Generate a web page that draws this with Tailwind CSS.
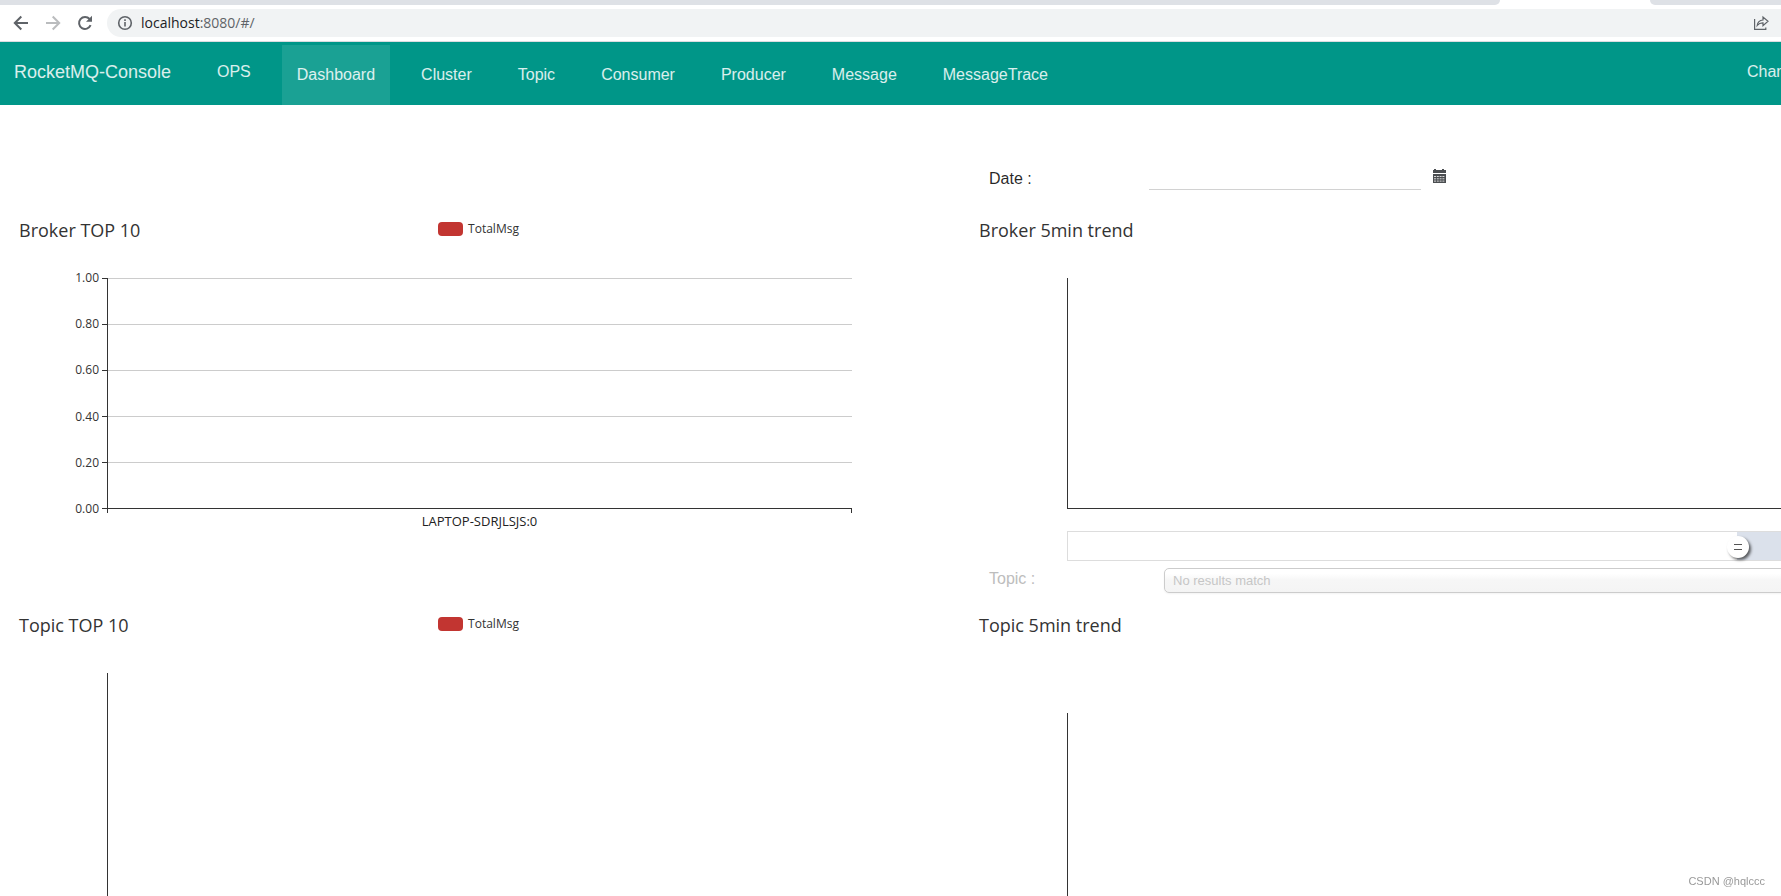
<!DOCTYPE html>
<html lang="en">
<head>
<meta charset="utf-8">
<title>RocketMQ-Console</title>
<script src="https://cdn.jsdelivr.net/npm/@tailwindcss/browser@4"></script>
</head>
<body class="flex h-screen flex-col overflow-hidden bg-white font-['Liberation_Sans',sans-serif] text-base text-black/85">

<!-- Browser toolbar -->
<header class="shrink-0 border-b border-[#dadce0] bg-white">
  <div class="flex h-[5px] justify-between">
    <div class="w-[1500px] rounded-br-lg bg-[#dee1e6]"></div>
    <div class="w-[131px] rounded-bl-lg bg-[#dee1e6]"></div>
  </div>
  <div class="flex items-center py-1 pl-[13px]">
    <button type="button" aria-label="Back" class="mr-4 size-4 text-[#5f6368]">
      <svg viewBox="0 0 16 16" class="size-4" fill="none" stroke="currentColor" stroke-width="2"><path d="M15 8H2.500M8.300 1.500 1.800 8l6.500 6.500"/></svg>
    </button>
    <button type="button" aria-label="Forward" class="mr-4 size-4 text-[#babcbe]">
      <svg viewBox="0 0 16 16" class="size-4" fill="none" stroke="currentColor" stroke-width="2"><path d="M1 8h12.500M7.700 1.500 14.200 8l-6.500 6.500"/></svg>
    </button>
    <button type="button" aria-label="Reload" class="mr-[14px] size-4 text-[#5f6368]">
      <svg viewBox="0 0 16 16" class="size-4" fill="none" stroke="currentColor" stroke-width="2"><path d="M13.600 10.200A6 6 0 1 1 12.600 4"/><path d="M15 .8v6H9z" fill="currentColor" stroke="none"/></svg>
    </button>
    <div class="flex h-7 flex-1 items-center rounded-l-full bg-[#f1f3f4] pl-[10px] pr-[12px]">
      <svg viewBox="0 0 16 16" class="mr-2 size-4 text-[#5f6368]" fill="none" stroke="currentColor" stroke-width="1.600"><circle cx="8" cy="8" r="6.300"/><path d="M8 7v4.500M8 4.300v1.600"/></svg>
      <p class="flex-1 font-['Open_Sans',sans-serif] text-sm text-[#5f6368]"><span class="text-[#202124]">localhost</span>:8080/#/</p>
      <button type="button" aria-label="Share" class="size-4 text-[#5f6368]">
        <svg viewBox="0 0 16 16" class="size-4" fill="none" stroke="currentColor" stroke-width="1.200"><path d="M1.600 4v10.400h11.200v-2"/><path d="M4.200 10.500C4.600 7 6.800 5.200 10 5V2l5 4.300-5 4.300V7.800c-2.600-.1-4.200.7-5.800 2.700z"/></svg>
      </button>
    </div>
  </div>
</header>

<!-- Main navigation -->
<nav class="flex h-[63px] min-w-[1920px] shrink-0 items-end bg-[#009688] text-white/85">
  <a href="#" class="flex h-[60px] w-[202px] items-center pb-[6px] pl-[14px] text-lg">RocketMQ-Console</a>
  <div class="flex h-[60px] flex-1 gap-4">
    <a href="#" class="flex items-center px-[15px] pb-[6px]">OPS</a>
    <a href="#" class="flex items-center bg-white/10 px-[15px]">Dashboard</a>
    <a href="#" class="flex items-center px-[15px]">Cluster</a>
    <a href="#" class="flex items-center px-[15px]">Topic</a>
    <a href="#" class="flex items-center px-[15px]">Consumer</a>
    <a href="#" class="flex items-center px-[15px]">Producer</a>
    <a href="#" class="flex items-center px-[15px]">Message</a>
    <a href="#" class="flex items-center px-[15px]">MessageTrace</a>
  </div>
  <button type="button" class="flex h-[60px] w-[173px] items-center pb-[6px]">ChangeLanguage</button>
</nav>

<!-- Dashboard -->
<main class="grid min-w-[1920px] flex-1 grid-cols-2 grid-rows-[auto_auto_auto_1fr]">
  <form class="col-start-2 flex items-center pb-[21px] pl-[29px] pt-[60px]">
    <label for="date" class="w-40 pt-[2px]">Date :</label>
    <input id="date" type="text" class="h-6 w-[272px] border-b border-[#d2d2d2] outline-none">
    <button type="button" aria-label="Pick a date" class="ml-3 text-[#4a4d50]">
      <svg viewBox="0 0 14 14" class="mb-1 size-[14px]"><path fill="currentColor" d="M0 1h1V0h2v1h6V0h2v1h2v3H0zM0 5h13v9H0z"/><path stroke="#fff" stroke-width=".8" stroke-dasharray="2 .8" d="M1 7.500h11M1 9.800h11M1 12.100h11"/></svg>
    </button>
  </form>

  <section class="col-start-1 h-[356px] font-['Open_Sans',sans-serif] text-[#333]">
    <div class="grid h-[58px] grid-cols-[1fr_auto_1fr] items-start pr-[3px] pt-1">
      <h2 class="pl-[19px] text-lg">Broker TOP 10</h2>
      <p class="flex items-center gap-[5px] pt-[5px] text-xs"><span class="h-[14px] w-[25px] rounded bg-[#c23531]"></span>TotalMsg</p>
    </div>
    <div class="flex">
      <ul class="flex h-[247px] w-[107px] flex-col justify-between text-xs">
        <li class="flex items-center justify-end gap-[3px]">1.00<span class="h-px w-[5px] bg-[#333]"></span></li>
        <li class="flex items-center justify-end gap-[3px]">0.80<span class="h-px w-[5px] bg-[#333]"></span></li>
        <li class="flex items-center justify-end gap-[3px]">0.60<span class="h-px w-[5px] bg-[#333]"></span></li>
        <li class="flex items-center justify-end gap-[3px]">0.40<span class="h-px w-[5px] bg-[#333]"></span></li>
        <li class="flex items-center justify-end gap-[3px]">0.20<span class="h-px w-[5px] bg-[#333]"></span></li>
        <li class="flex items-center justify-end gap-[3px]">0.00<span class="h-px w-[5px] bg-[#333]"></span></li>
      </ul>
      <div class="mr-[108px] flex-1 pt-2">
        <div class="border-b border-l border-[#333]">
          <div class="h-[46px] border-t border-[#ccc]"></div>
          <div class="h-[46px] border-t border-[#ccc]"></div>
          <div class="h-[46px] border-t border-[#ccc]"></div>
          <div class="h-[46px] border-t border-[#ccc]"></div>
          <div class="h-[46px] border-t border-[#ccc]"></div>
        </div>
        <div class="h-1 border-x border-[#333]"></div>
        <p class="text-center text-[13px] leading-4 text-[#222]">LAPTOP-SDRJLSJS:0</p>
      </div>
    </div>
  </section>

  <section class="col-start-2 font-['Open_Sans',sans-serif] text-[#333]">
    <h2 class="h-[66px] pl-[19px] pt-1 text-lg">Broker 5min trend</h2>
    <div class="ml-[107px] mr-[108px] h-[231px] border-b border-l border-[#333]"></div>
    <div class="ml-[107px] mr-[108px] mt-[22px] flex h-[30px] border border-[#ddd]">
      <div class="w-[90%]"></div>
      <div class="relative flex-1 bg-[#dbe1eb]">
        <button type="button" aria-label="Zoom range start" class="absolute -left-[10px] top-1 flex size-[22px] flex-col items-center justify-center gap-1 rounded-full bg-white shadow-[2px_2px_3px_rgba(0,0,0,0.6)]">
          <span class="h-px w-2 bg-[#555]"></span><span class="h-px w-2 bg-[#555]"></span>
        </button>
      </div>
    </div>
  </section>

  <form class="col-start-2 flex h-[39px] items-start pl-[29px]">
    <label for="topic" class="w-[175px] leading-[22px] text-[#bdbdbd]">Topic :</label>
    <select id="topic" disabled class="h-[25px] flex-1 appearance-none rounded-[5px] border border-[#ccc] bg-linear-to-b from-white from-20% via-[#f6f6f6] via-50% to-[#f4f4f4] px-2 text-[13px] text-[#c6c6c6] opacity-100 shadow-xs">
      <option>No results match</option>
    </select>
  </form>

  <section class="col-start-1 flex flex-col font-['Open_Sans',sans-serif] text-[#333]">
    <div class="grid h-[66px] grid-cols-[1fr_auto_1fr] items-start pr-[3px] pt-1">
      <h2 class="pl-[19px] text-lg">Topic TOP 10</h2>
      <p class="flex items-center gap-[5px] pt-[5px] text-xs"><span class="h-[14px] w-[25px] rounded bg-[#c23531]"></span>TotalMsg</p>
    </div>
    <div class="ml-[107px] flex-1 border-l border-[#333]"></div>
  </section>

  <section class="col-start-2 flex flex-col font-['Open_Sans',sans-serif] text-[#333]">
    <h2 class="h-[106px] pl-[19px] pt-1 text-lg">Topic 5min trend</h2>
    <div class="ml-[107px] flex-1 border-l border-[#333]"></div>
  </section>
</main>

<p class="fixed bottom-[7px] right-4 text-[11px] leading-4 text-[#999]">CSDN @hqlccc</p>
</body>
</html>
